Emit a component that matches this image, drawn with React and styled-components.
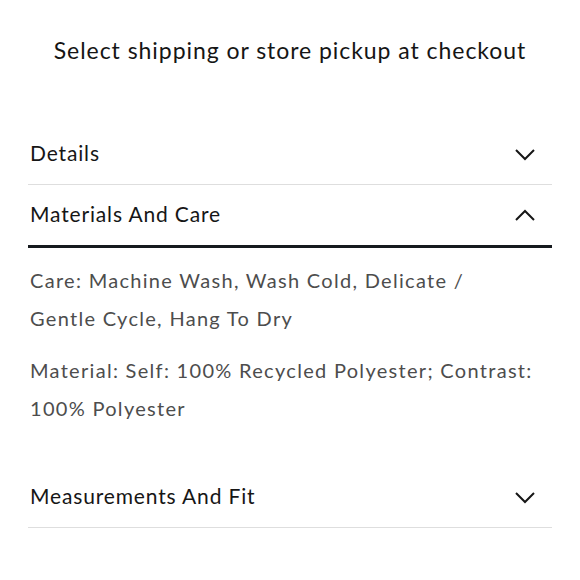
import styled, { createGlobalStyle } from "styled-components"

const GlobalStyle = createGlobalStyle`
  body {
    margin: 0;
    background: #fff;
    font-family: Lato, "Noto Sans", sans-serif;
  }
`

const Page = styled.div`
  width: 580px;
  padding: 0 28px;
  box-sizing: border-box;
`

const Headline = styled.h2`
  margin: 35px 0 59px;
  font-size: 23px;
  line-height: 30px;
  font-weight: 400;
  letter-spacing: 0.95px;
  text-align: center;
  color: #151515;
`

const Row = styled.div`
  display: flex;
  align-items: center;
  justify-content: space-between;
  height: 60px;
  padding: 0 16px 0 2px;
  border-bottom: ${props => props.open ? "3px solid #161a1e" : "1px solid #dedede"};
  color: #161616;
  font-size: 21px;
  letter-spacing: 0.85px;
`

const Title = styled.span`
  margin-top: -4px;
`

const Body = styled.div`
  padding: 13px 16px 40px 2px;
  display: flex;
  flex-direction: column;
  gap: 14px;
`

const Para = styled.p`
  margin: 0;
  font-size: 20px;
  line-height: 38px;
  letter-spacing: 1.3px;
  color: #4d4d4d;
`

function Chevron({ up }) {
  return (
    <svg width="22" height="14" viewBox="0 0 22 14">
      <polyline
        points={up ? "2,12 11,3 20,12" : "2,3 11,12 20,3"}
        fill="none"
        stroke="#161616"
        strokeWidth="2"
      />
    </svg>
  )
}

export default function App() {
  return (
    <Page>
      <GlobalStyle />
      <Headline>Select shipping or store pickup at checkout</Headline>
      <Row>
        <Title>Details</Title>
        <Chevron />
      </Row>
      <Row open>
        <Title>Materials And Care</Title>
        <Chevron up />
      </Row>
      <Body>
        <Para>Care: Machine Wash, Wash Cold, Delicate / Gentle Cycle, Hang To Dry</Para>
        <Para>Material: Self: 100% Recycled Polyester; Contrast: 100% Polyester</Para>
      </Body>
      <Row>
        <Title>Measurements And Fit</Title>
        <Chevron />
      </Row>
    </Page>
  )
}
